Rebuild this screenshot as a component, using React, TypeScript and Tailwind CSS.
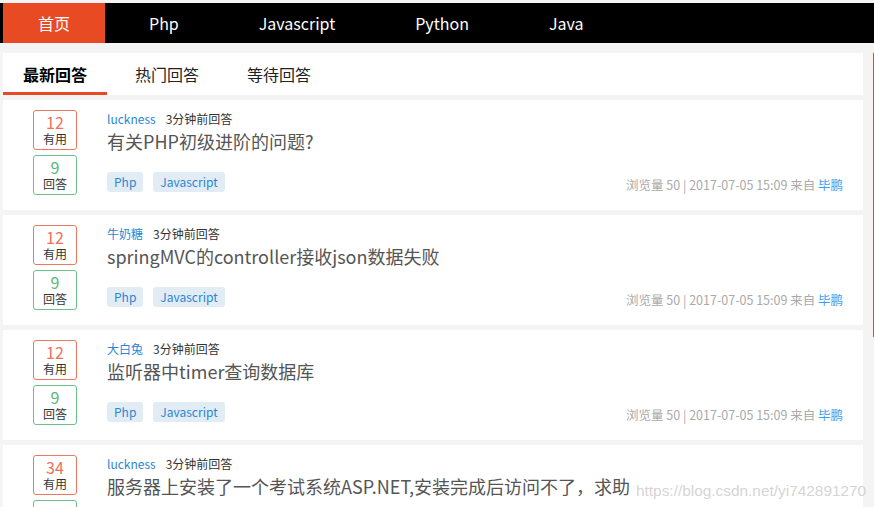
import React from 'react';

const FONT = { fontFamily: '"Noto Sans CJK SC", "Noto Sans", sans-serif' };

const navItems = ['Php', 'Javascript', 'Python', 'Java'];

type Question = {
  useful: number;
  answers: number;
  user: string;
  title: string;
  tags: string[];
};

const questions: Question[] = [
  { useful: 12, answers: 9, user: 'luckness', title: '有关PHP初级进阶的问题?', tags: ['Php', 'Javascript'] },
  { useful: 12, answers: 9, user: '牛奶糖', title: 'springMVC的controller接收json数据失败', tags: ['Php', 'Javascript'] },
  { useful: 12, answers: 9, user: '大白兔', title: '监听器中timer查询数据库', tags: ['Php', 'Javascript'] },
  { useful: 34, answers: 9, user: 'luckness', title: '服务器上安装了一个考试系统ASP.NET,安装完成后访问不了，求助', tags: ['Php', 'Javascript'] },
];

function QuestionCard({ q }: { q: Question }) {
  return (
    <div className="mt-[5px] flex h-[110px] shrink-0 bg-white pl-[30px] pr-5 pt-[10px]">
      <div className="flex w-[44px] shrink-0 flex-col gap-[5px]">
        <div className="flex h-[40px] flex-col items-center rounded-[3px] border border-[#ee7760] pt-[2px]">
          <div className="text-[16px] leading-[18px] text-[#f0705a]">{q.useful}</div>
          <div className="text-[12px] leading-[15px] text-[#333]">有用</div>
        </div>
        <div className="flex h-[40px] flex-col items-center rounded-[3px] border border-[#6cc08a] pt-[2px]">
          <div className="text-[16px] leading-[18px] text-[#5cb87a]">{q.answers}</div>
          <div className="text-[12px] leading-[15px] text-[#333]">回答</div>
        </div>
      </div>
      <div className="ml-[30px] flex min-w-0 flex-1 flex-col">
        <div className="flex items-center gap-[10px] text-[12px] leading-[18px]">
          <span className="text-[#2a86d4]">{q.user}</span>
          <span className="text-[#333]">3分钟前回答</span>
        </div>
        <div className="whitespace-nowrap text-[18px] leading-[26px] text-[#555]">{q.title}</div>
        <div className="mt-[16px] flex items-center justify-between">
          <div className="flex gap-[10px]">
            {q.tags.map((t) => (
              <span key={t} className="flex h-[20px] items-center rounded-[3px] bg-[#e2ecf5] px-[7px] text-[12px] text-[#2a86d4]">
                {t}
              </span>
            ))}
          </div>
          <div className="mt-[6px] text-[12.5px] text-[#aaa]">
            浏览量 50 | 2017-07-05 15:09 来自 <span className="text-[#3a9ff0]">毕鹏</span>
          </div>
        </div>
      </div>
    </div>
  );
}

export default function App() {
  return (
    <div className="relative h-[507px] w-[874px] overflow-hidden bg-[#f4f4f4] pt-[3px]" style={FONT}>
      <nav className="flex h-10 items-stretch bg-black pl-[3px] text-[16px] text-white">
        <div className="flex w-[102px] items-center justify-center bg-[#e84b23]">首页</div>
        <div className="ml-1 flex">
          {navItems.map((n) => (
            <div key={n} className="flex items-center px-10">{n}</div>
          ))}
        </div>
      </nav>

      <div className="ml-[3px] mt-[10px] flex w-[860px] flex-col">
        <div className="flex h-[42px] bg-white text-[16px] text-[#222]">
          <div className="flex items-center border-b-[3px] border-[#e84b23] px-5 pt-[3px] font-semibold text-black">最新回答</div>
          <div className="ml-2 flex items-center px-5">热门回答</div>
          <div className="ml-2 flex items-center px-5">等待回答</div>
        </div>
        {questions.map((q, i) => (
          <QuestionCard key={i} q={q} />
        ))}
      </div>

      <div className="absolute right-0 top-[53px] h-[284px] w-px bg-[#d9502e]" />
      <div className="absolute left-[636px] top-[479px] whitespace-nowrap text-[15.4px] text-[#cfcfcf]/90" style={{ fontFamily: '"Liberation Sans", sans-serif' }}>
        https://blog.csdn.net/yi742891270
      </div>
    </div>
  );
}
